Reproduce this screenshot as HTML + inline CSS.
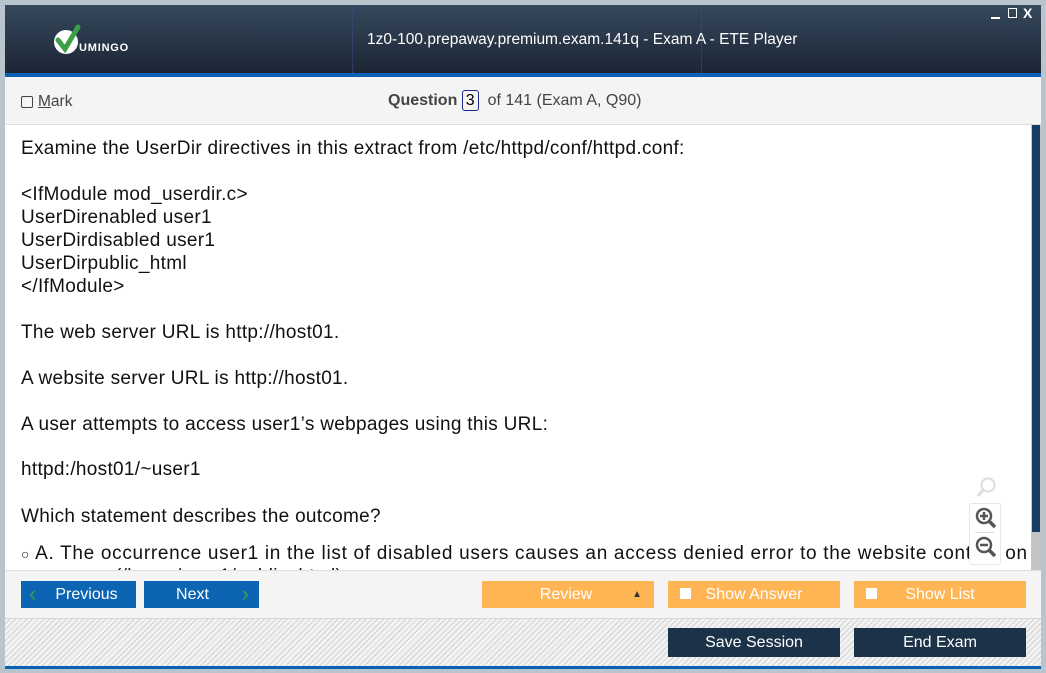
<!DOCTYPE html><html><head><style>
body{margin:0;width:1046px;height:673px;background:#b9c5cc;font-family:"Liberation Sans",Arial,sans-serif;position:relative;overflow:hidden}
.a{position:absolute}
#hd{left:5px;top:5px;width:1036px;height:68px;background:linear-gradient(#36495d,#1b2535)}
#bl{left:5px;top:73px;width:1036px;height:4px;background:#0b62b4}
#tb{left:5px;top:77px;width:1036px;height:47px;background:#f4f4f4;border-bottom:1px solid #dcdcdc}
#ct{left:5px;top:125px;width:1026px;height:445px;background:#fff;overflow:hidden}
.l{position:absolute;left:16px;font-size:19px;letter-spacing:0.3px;color:#111;white-space:nowrap;line-height:23px}
#bb{left:5px;top:570px;width:1036px;height:48px;background:#f4f4f4;border-top:1px solid #ddd}
#ht{left:5px;top:618px;width:1036px;height:48px;background:repeating-linear-gradient(135deg,#f2f2f2 0 3px,#d2d2d2 3px 4px);border-top:1px solid #d8d8d8}
.btn{position:absolute;height:27px;line-height:27px;text-align:center;font-size:16px;color:#fff}
.bl{background:#0c64b2}.or{background:#ffb554}.dk{background:#1b3249}
.cb{position:absolute;left:12px;top:7px;width:11px;height:11px;background:#fff}
</style></head><body>
<div class="a" id="hd">
<svg class="a" style="left:44px;top:18px" width="100" height="36"><circle cx="17" cy="19" r="12" fill="#fff"/><path d="M9 17l7 9 13-22" stroke="#3aa046" stroke-width="5" fill="none" stroke-linecap="round"/><text x="30" y="28" font-size="11" font-weight="bold" fill="#fff" font-family="Liberation Sans" letter-spacing="0.8">UMINGO</text></svg>
<div class="a" style="left:347px;top:0;width:1px;height:68px;border-left:1px dotted #3a4f86"></div>
<div class="a" style="left:696px;top:0;width:1px;height:68px;border-left:1px dotted #3a4f86"></div>
<div class="a" style="left:362px;top:26px;color:#fff;font-size:15.5px">1z0-100.prepaway.premium.exam.141q - Exam A - ETE Player</div>
<div class="a" style="left:986px;top:12px;width:9px;height:2px;background:#fff"></div>
<div class="a" style="left:1003px;top:3px;width:7px;height:8px;border:1.5px solid #fff"></div>
<div class="a" style="left:1018px;top:0px;color:#fff;font-size:14px;font-weight:bold">X</div>
</div>
<div class="a" id="bl"></div>
<div class="a" id="tb">
<div class="a" style="left:16px;top:19px;width:10px;height:10px;border:1px solid #444;border-radius:2px"></div>
<div class="a" style="left:33px;top:16px;font-size:15.5px;color:#444"><u>M</u>ark</div>
<div class="a" style="left:383px;top:15px;font-size:16px;color:#444"><b>Question</b> <span style="border:1px solid #1a2a8a;border-radius:3px;padding:1px 3px;color:#000">3</span> &nbsp;of 141 (Exam A, Q90)</div>
</div>
<div class="a" id="ct">
<div class="l" style="top:12px">Examine the UserDir directives in this extract from /etc/httpd/conf/httpd.conf:</div>
<div class="l" style="top:58px">&lt;IfModule mod_userdir.c&gt;</div>
<div class="l" style="top:81px">UserDirenabled user1</div>
<div class="l" style="top:104px">UserDirdisabled user1</div>
<div class="l" style="top:127px">UserDirpublic_html</div>
<div class="l" style="top:150px">&lt;/IfModule&gt;</div>
<div class="l" style="top:196px">The web server URL is http://host01.</div>
<div class="l" style="top:242px">A website server URL is http://host01.</div>
<div class="l" style="top:288px">A user attempts to access user1’s webpages using this URL:</div>
<div class="l" style="top:333px">httpd:/host01/~user1</div>
<div class="l" style="top:380px">Which statement describes the outcome?</div>
<div class="l" style="top:417px;letter-spacing:0.7px"><span style="font-size:14px">○</span> A. The occurrence user1 in the list of disabled users causes an access denied error to the website contain on</div>
<div class="l" style="top:440px;left:110px">(/home/user1/public_html) ...</div>
<svg class="a" style="left:969px;top:350px" width="26" height="26"><circle cx="14" cy="10" r="6.5" fill="none" stroke="#ddd" stroke-width="2"/><path d="M9 15l-5 6" stroke="#ddd" stroke-width="3"/></svg>
<div class="a" style="left:964px;top:378px;width:30px;height:60px;background:#fff;border:1px solid #e6e6e6;border-radius:3px"></div>
<div class="a" style="left:970px;top:407px;width:19px;height:1px;background:#ddd"></div>
<svg class="a" style="left:968px;top:381px" width="26" height="26"><circle cx="11" cy="10" r="7" fill="#fff" stroke="#555" stroke-width="2.5"/><path d="M7 10h8M11 6v8" stroke="#555" stroke-width="2.5"/><path d="M16 15l6 6" stroke="#555" stroke-width="3.5"/></svg>
<svg class="a" style="left:968px;top:410px" width="26" height="26"><circle cx="11" cy="10" r="7" fill="#fff" stroke="#555" stroke-width="2.5"/><path d="M7 10h8" stroke="#555" stroke-width="2.5"/><path d="M16 15l6 6" stroke="#555" stroke-width="3.5"/></svg>
</div>
<div class="a" style="left:1031px;top:125px;width:10px;height:445px;background:#c4c4c4"></div>
<div class="a" style="left:1032px;top:125px;width:8px;height:407px;background:#173d66"></div>
<div class="a" id="bb">
<div class="btn bl" style="left:16px;top:10px;width:115px"><span style="position:absolute;left:8px;color:#3aa046;font-size:22px;top:-1px">‹</span><span style="padding-left:16px">Previous</span></div>
<div class="btn bl" style="left:139px;top:10px;width:115px"><span style="padding-right:18px">Next</span><span style="position:absolute;right:10px;color:#3aa046;font-size:22px;top:-1px">›</span></div>
<div class="btn or" style="left:477px;top:10px;width:172px"><span style="padding-right:4px">Review</span><span style="position:absolute;right:12px;color:#333;font-size:10px">▲</span></div>
<div class="btn or" style="left:663px;top:10px;width:172px"><span class="cb"></span>Show Answer</div>
<div class="btn or" style="left:849px;top:10px;width:172px"><span class="cb"></span>Show List</div>
</div>
<div class="a" id="ht">
<div class="btn dk" style="left:663px;top:9px;width:172px;height:29px;line-height:29px">Save Session</div>
<div class="btn dk" style="left:849px;top:9px;width:172px;height:29px;line-height:29px">End Exam</div>
</div>
<div class="a" style="left:5px;top:666px;width:1036px;height:3px;background:#0b62b4"></div>
</body></html>
